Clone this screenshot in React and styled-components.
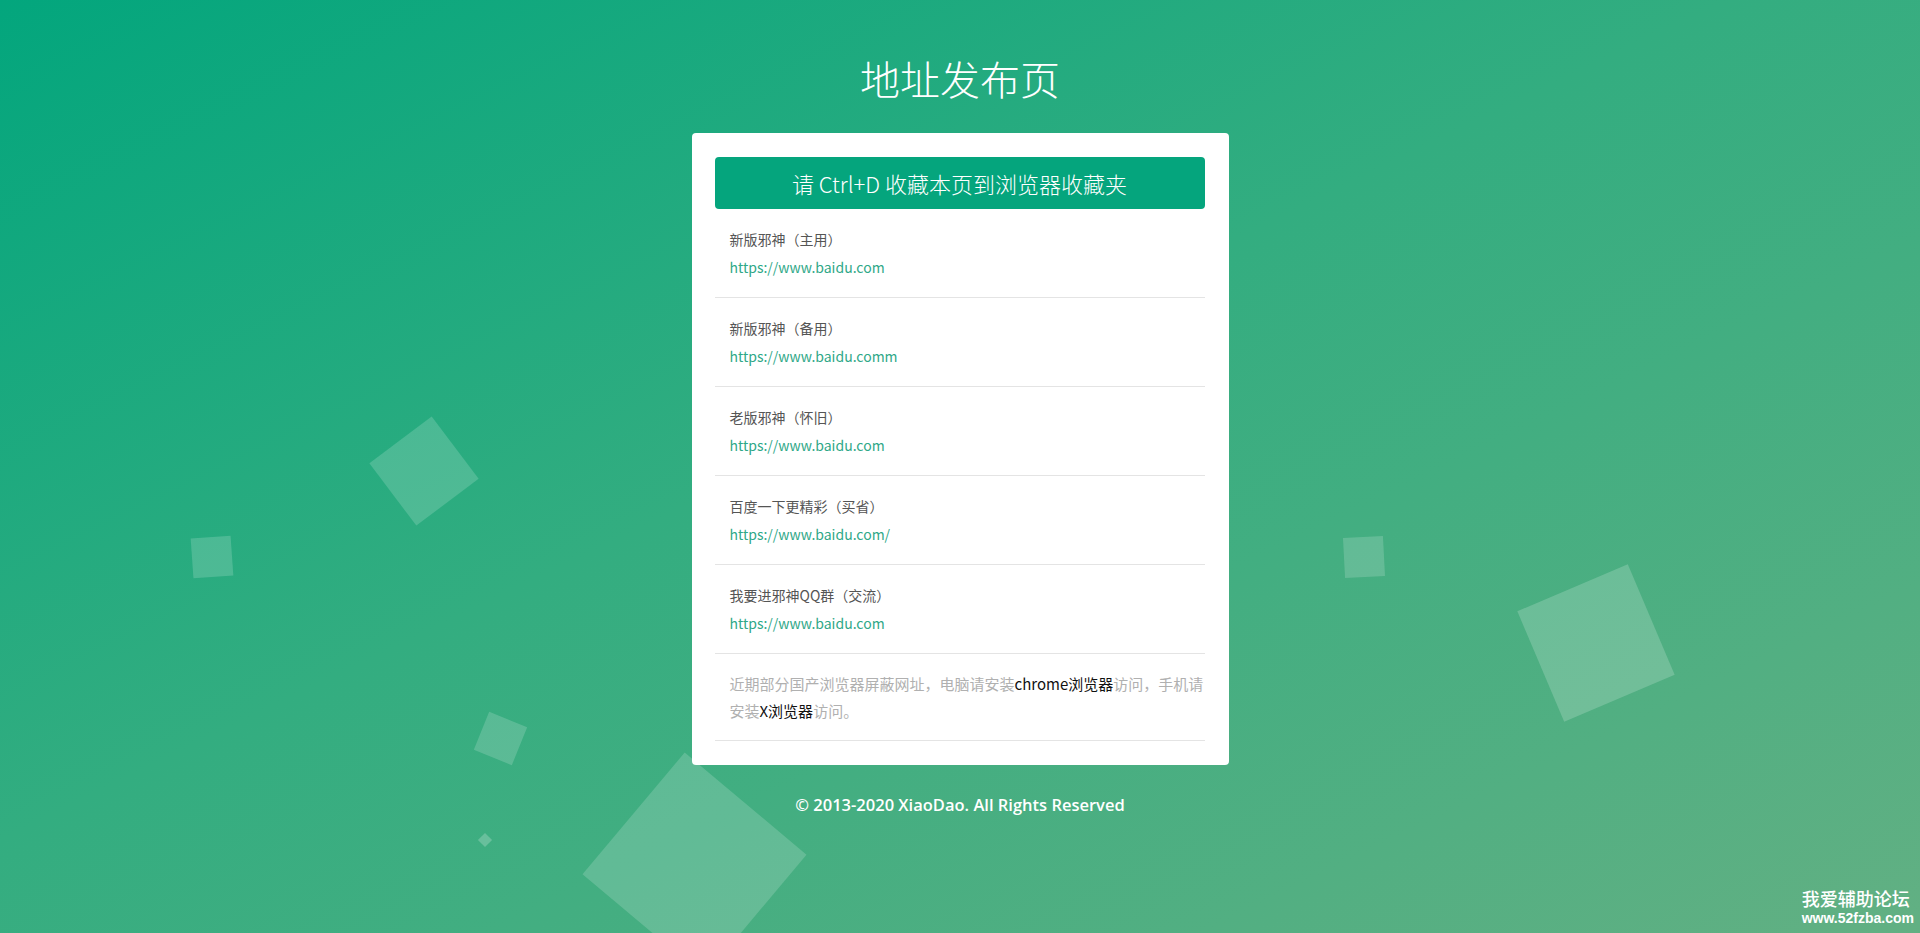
import React from 'react'
import styled, { createGlobalStyle } from 'styled-components'

const GlobalStyle = createGlobalStyle`
  html, body {
    margin: 0;
    padding: 0;
  }
  body {
    font-family: "Open Sans", "Noto Sans CJK SC", sans-serif;
  }
`

const Page = styled.div`
  position: relative;
  width: 100%;
  height: 100vh;
  overflow: hidden;
  background: linear-gradient(to bottom right, #03a67d 0%, #33ad80 45%, #62b083 100%);
  display: flex;
  flex-direction: column;
  align-items: center;
`

const Bubbles = styled.div`
  position: absolute;
  inset: 0;
  pointer-events: none;
`

const Bubble = styled.span`
  position: absolute;
  left: ${p => p.$x - p.$size / 2}px;
  top: ${p => p.$y - p.$size / 2}px;
  width: ${p => p.$size}px;
  height: ${p => p.$size}px;
  background: rgba(255, 255, 255, ${p => p.$alpha || 0.17});
  transform: rotate(${p => p.$rotate}deg);
`

const Title = styled.h1`
  position: relative;
  margin: 50px 0 27px;
  font-family: "Noto Sans CJK SC", sans-serif;
  font-weight: 300;
  font-size: 40px;
  line-height: 56px;
  color: #ffffff;
`

const Card = styled.div`
  position: relative;
  width: 490px;
  padding: 24px 24px 24px 23px;
  background: #ffffff;
  border-radius: 4px;
`

const Banner = styled.div`
  height: 52px;
  border-radius: 4px;
  background: #05a57d;
  color: #ffffff;
  display: flex;
  align-items: center;
  justify-content: center;
  font-family: "Noto Sans CJK SC", sans-serif;
  font-weight: 300;
  font-size: 22px;
`

const Item = styled.div`
  padding: 16px 0 16px 15px;
  border-bottom: 1px solid #e4e4e4;
  font-family: "Noto Sans CJK SC", sans-serif;
  font-size: 14px;
  line-height: 28px;
`

const Label = styled.div`
  color: #555555;
`

const Link = styled.a`
  display: block;
  color: #2fa888;
  text-decoration: none;
`

const Notice = styled.div`
  padding: 16px 0 16px 15px;
  border-bottom: 1px solid #e4e4e4;
  font-family: "Noto Sans CJK SC", sans-serif;
  font-size: 15px;
  line-height: 27px;
  color: #b0b0b0;
  b {
    font-weight: 400;
    color: #111111;
  }
`

const Footer = styled.div`
  position: relative;
  margin-top: 28px;
  font-family: "Open Sans", sans-serif;
  font-weight: 600;
  font-size: 16.5px;
  line-height: 24px;
  color: #ffffff;
`

const Watermark = styled.div`
  position: absolute;
  right: 6px;
  bottom: 6px;
  color: #ffffff;
  text-align: left;
  .cn {
    font-family: "Noto Sans CJK SC", sans-serif;
    font-weight: 500;
    font-size: 18px;
    line-height: 22px;
  }
  .en {
    font-family: "Liberation Sans", Arial, sans-serif;
    font-weight: 700;
    font-size: 14px;
    line-height: 18px;
  }
`

const bubbles = [
  { x: 424, y: 471, size: 78, rotate: -37 },
  { x: 212, y: 557, size: 40, rotate: -4 },
  { x: 500, y: 738, size: 41, rotate: 22 },
  { x: 485, y: 840, size: 10, rotate: 45, alpha: 0.22 },
  { x: 694, y: 864, size: 159, rotate: 40 },
  { x: 1364, y: 557, size: 40, rotate: -3 },
  { x: 1596, y: 643, size: 120, rotate: -23, alpha: 0.19 },
]

const links = [
  { name: '新版邪神（主用）', url: 'https://www.baidu.com' },
  { name: '新版邪神（备用）', url: 'https://www.baidu.comm' },
  { name: '老版邪神（怀旧）', url: 'https://www.baidu.com' },
  { name: '百度一下更精彩（买省）', url: 'https://www.baidu.com/' },
  { name: '我要进邪神QQ群（交流）', url: 'https://www.baidu.com' },
]

function App() {
  return (
    <Page>
      <GlobalStyle />
      <Bubbles>
        {bubbles.map((b, i) => (
          <Bubble key={i} $x={b.x} $y={b.y} $size={b.size} $rotate={b.rotate} $alpha={b.alpha} />
        ))}
      </Bubbles>

      <Title>地址发布页</Title>

      <Card>
        <Banner>请 Ctrl+D 收藏本页到浏览器收藏夹</Banner>
        {links.map((l, i) => (
          <Item key={i}>
            <Label>{l.name}</Label>
            <Link href="#">{l.url}</Link>
          </Item>
        ))}
        <Notice>
          近期部分国产浏览器屏蔽网址，电脑请安装<b>chrome浏览器</b>访问，手机请安装<b>X浏览器</b>访问。
        </Notice>
      </Card>

      <Footer>© 2013-2020 XiaoDao. All Rights Reserved</Footer>

      <Watermark>
        <div className="cn">我爱辅助论坛</div>
        <div className="en">www.52fzba.com</div>
      </Watermark>
    </Page>
  )
}

export default App
